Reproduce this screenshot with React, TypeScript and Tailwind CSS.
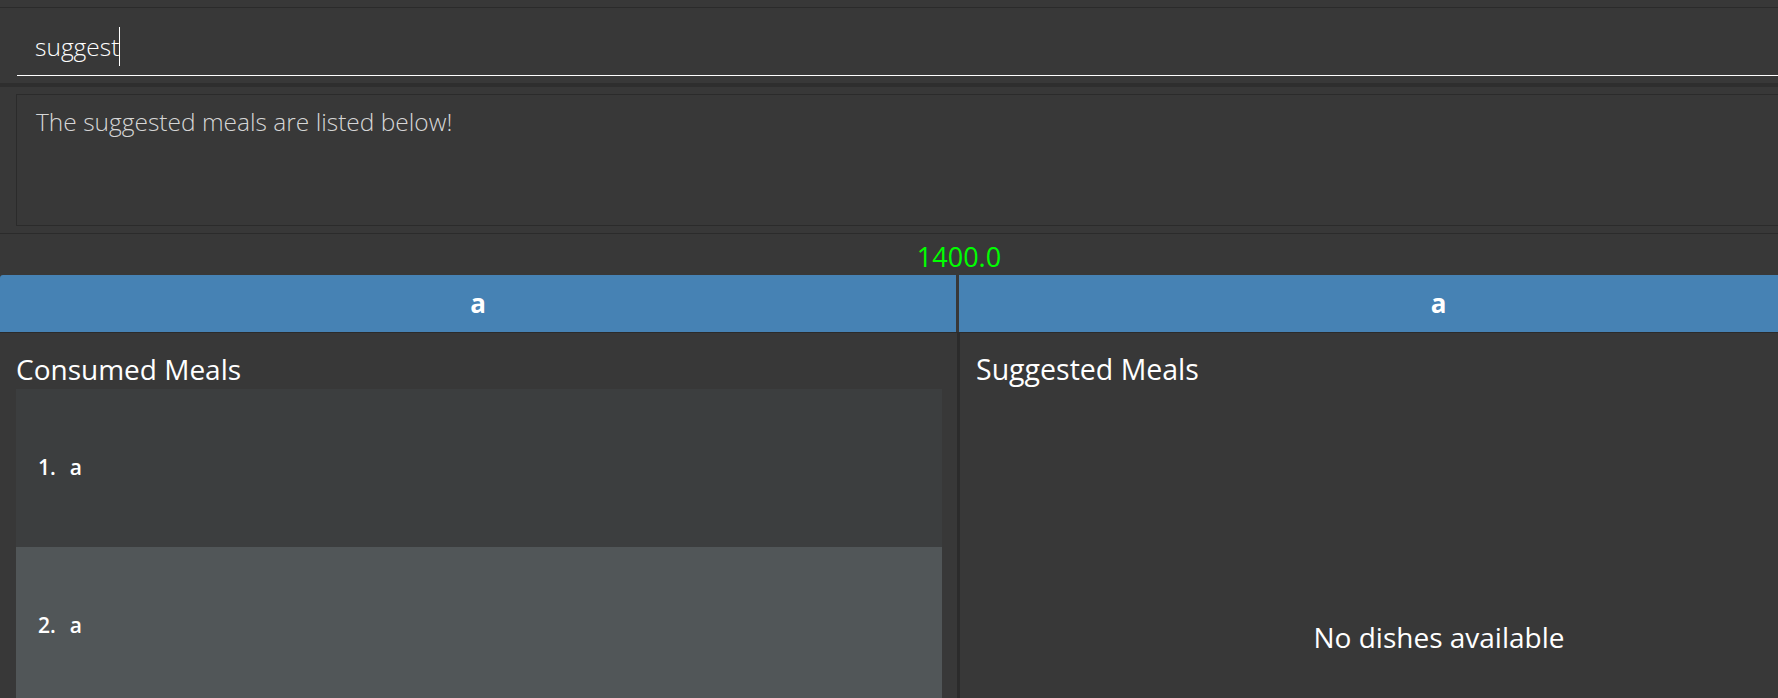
const sans = "font-['Open_Sans','Noto_Sans',sans-serif]";

function MealRow({ index, name, odd }: { index: number; name: string; odd?: boolean }) {
  return (
    <div
      className={`flex h-[158px] items-center pl-[22px] text-[21px] font-semibold text-white ${
        odd ? "bg-[#515658]" : "bg-[#3c3e3f]"
      }`}
    >
      <span>{index}.</span>
      <span className="ml-[14px]">{name}</span>
    </div>
  );
}

export default function App() {
  const consumed = ["a", "a"];

  return (
    <div className={`h-[698px] w-[1778px] overflow-hidden bg-[#383838] ${sans}`}>
      <div className="flex w-[1918px] flex-col">
        {/* top strip */}
        <div className="h-[8px] border-b border-[#2b2b2b]" />

        {/* command box */}
        <div className="h-[75px] pl-[17px] pt-[19px]">
          <div className="flex h-[49px] items-start border-b border-white pl-[18px]">
            <span className="text-[24.5px] font-light leading-[39px] text-white">suggest</span>
            <span className="inline-block h-[39px] w-px bg-white" />
          </div>
        </div>

        <div className="h-[4px] bg-[#2e2e2e]" />

        {/* result display */}
        <div className="h-[146px] px-[16px] pb-[8px] pt-[7px]">
          <div className="h-[132px] border border-[#2b2b2b] pl-[19px] pt-[11px]">
            <p className="text-[24.5px] font-light leading-[32px] text-[#d6d6d6]">
              The suggested meals are listed below!
            </p>
          </div>
        </div>

        {/* calorie status */}
        <div className="flex h-[42px] justify-center border-t border-[#2b2b2b] pt-[4px]">
          <span className="text-[27px] leading-[37px] text-[#00ff00]">1400.0</span>
        </div>

        {/* tabs */}
        <div className="flex h-[58px] border-b border-[#2b2b2b]">
          <div className="flex w-[956px] items-center justify-center rounded-tl-[3px] bg-[#4682b4] text-[26px] font-bold text-white">
            a
          </div>
          <div className="w-[3px]" />
          <div className="flex flex-1 items-center justify-center rounded-tr-[3px] bg-[#4682b4] text-[26px] font-bold text-white">
            a
          </div>
        </div>

        {/* panels */}
        <div className="flex">
          <div className="w-[957px] pl-[16px] pr-[15px] pt-[16px]">
            <h2 className="text-[28px] font-normal leading-[40px] text-white">Consumed Meals</h2>
            <div className="flex flex-col">
              {consumed.map((m, i) => (
                <MealRow key={i} index={i + 1} name={m} odd={i % 2 === 1} />
              ))}
            </div>
          </div>
          <div className="w-[3px] self-stretch bg-[#2b2b2b]" />
          <div className="flex-1 pl-[16px] pt-[16px]">
            <h2 className="text-[28.5px] font-normal leading-[40px] text-white">Suggested Meals</h2>
            <div className="flex h-[496px] items-center justify-center pr-[16px]">
              <span className="text-[28px] text-white">No dishes available</span>
            </div>
          </div>
        </div>
      </div>
    </div>
  );
}
